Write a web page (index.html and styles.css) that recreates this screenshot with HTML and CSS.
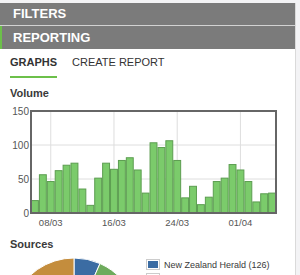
FILE: index.html
```html
<!DOCTYPE html>
<html lang="en">
<head>
  <meta charset="UTF-8" />
  <title>Reporting - Graphs</title>
  <link rel="stylesheet" href="styles.css">
</head>
<body>

  <div class="sidebar">
    <div class="panel-head">FILTERS</div>
    <div class="panel-head active">REPORTING</div>

    <div class="panel-body">
      <ul class="tabs">
        <li class="tab active">GRAPHS</li>
        <li class="tab">CREATE REPORT</li>
      </ul>

      <h3 class="graph-title">Volume</h3>
      <svg class="chart" id="volumeChart" width="275" height="128" viewBox="10 104 275 128"></svg>

      <h3 class="graph-title sources-title">Sources</h3>
      <div class="sources">
        <svg class="pie" width="128" height="128" viewBox="10 258 128 128">
          <path d="M74 322 L74 258 A64 64 0 0 1 100.03 263.54 Z" fill="#3b6ca3"/>
          <path d="M74 322 L100.03 263.54 A64 64 0 0 1 121.56 279.18 Z" fill="#6eab5c"/>
          <path d="M74 322 L121.56 279.18 A64 64 0 0 1 137.03 333.11 Z" fill="#c0504d"/>
          <path d="M74 322 L137.03 333.11 A64 64 0 0 1 74 386 Z" fill="#8fb5d8"/>
          <path d="M74 322 L74 386 A64 64 0 0 1 13.86 300.11 Z" fill="#8064a2"/>
          <path d="M74 322 L13.86 300.11 A64 64 0 0 1 74 258 Z" fill="#c48d3d"/>
        </svg>
        <ul class="legend">
          <li><span class="swatch"><span class="swatch-fill blue"></span></span>New Zealand Herald (126)</li>
          <li><span class="swatch"><span class="swatch-fill green"></span></span>Stuff.co.nz (95)</li>
        </ul>
      </div>
    </div>
  </div>

  <script>
    // daily volume, 06/03 - 05/04
    const volume = [19,57,47,63,71,74,36,12,52,74,65,78,82,64,30,104,97,107,78,23,40,13,24,47,52,72,64,47,17,29,30];

    function drawVolume(el, data) {
      const left = 31, top = 111, right = 276, bottom = 213;
      const slot = (right - left) / data.length;
      const scale = (bottom - top) / 150;
      let svg = '';

      // grid
      [50, 100].forEach(v => {
        const y = bottom - v * scale;
        svg += `<line x1="${left}" x2="${right}" y1="${y}" y2="${y}" class="grid"/>`;
      });
      const ticks = { 2: '08/03', 10: '16/03', 18: '24/03', 26: '01/04' };
      Object.keys(ticks).forEach(i => {
        const x = left + (+i + 0.5) * slot;
        svg += `<line x1="${x}" x2="${x}" y1="${top}" y2="${bottom}" class="grid"/>`;
        svg += `<text x="${x}" y="${bottom + 13}" class="x-label">${ticks[i]}</text>`;
      });

      // bars
      data.forEach((v, i) => {
        const h = v * scale;
        svg += `<rect x="${left + i * slot + 0.5}" y="${bottom - h + 0.5}" width="${slot - 1}" height="${h - 0.5}" class="bar"/>`;
      });

      // y axis labels
      [0, 50, 100, 150].forEach(v => {
        svg += `<text x="29" y="${bottom - v * scale + 3.5}" class="y-label">${v}</text>`;
      });

      svg += `<rect x="${left}" y="${top}" width="${right - left}" height="${bottom - top}" class="frame"/>`;
      el.innerHTML = svg;
    }

    drawVolume(document.getElementById("volumeChart"), volume);
  </script>
</body>
</html>
```

FILE: styles.css
```css
html, body {
  margin: 0;
  padding: 0;
  font-family: "Liberation Sans", Arial, sans-serif;
  background-color: #f3f3f5;
  color: #333;
}

.sidebar {
  width: 295px;
  margin-top: 3px;
  min-height: 272px;
  background-color: #fff;
  border-right: 1px solid #dadada;
}

.panel-head {
  height: 22px;
  line-height: 22px;
  padding-left: 13px;
  background-color: #7b7b7b;
  color: #fff;
  font-size: 13px;
  font-weight: bold;
  border-bottom: 1px solid #d2d2d2;
}

.panel-head.active {
  height: 23px;
  line-height: 23px;
  padding-left: 11px;
  border-left: 2px solid #6cc04a;
  border-bottom: none;
}

.panel-body {
  padding: 0 10px;
}

.tabs {
  list-style: none;
  display: flex;
  gap: 15px;
  margin: 0;
  padding: 6px 0 0 0;
}

.tab {
  font-size: 11px;
  line-height: 14px;
  padding-bottom: 7px;
  border-bottom: 2px solid transparent;
  color: #333;
}

.tab.active {
  font-weight: bold;
  border-bottom-color: #6cc04a;
}

.graph-title {
  margin: 8px 0 0 0;
  font-size: 11px;
  line-height: 14px;
  font-weight: bold;
  color: #3a3a3a;
}

.chart {
  display: block;
  margin-top: 4px;
}

.chart .grid {
  stroke: #dedede;
  stroke-width: 1;
}

.chart .bar {
  fill: #7bcb6b;
  stroke: #5c9d50;
  stroke-width: 1;
}

.chart .frame {
  fill: none;
  stroke: #666;
  stroke-width: 2;
}

.chart text {
  font-family: "Liberation Sans", Arial, sans-serif;
  fill: #555;
}

.chart .y-label {
  font-size: 10px;
  text-anchor: end;
}

.chart .x-label {
  font-size: 9.5px;
  text-anchor: middle;
}

.sources-title {
  margin-top: 5px;
}

.sources {
  display: flex;
  align-items: flex-start;
  margin-top: 7px;
}

.pie {
  display: block;
  flex-shrink: 0;
}

.pie path {
  stroke: #fff;
  stroke-width: 1;
}

.legend {
  list-style: none;
  margin: 0 0 0 8px;
  padding: 0;
  font-size: 9px;
  color: #3a3a3a;
}

.legend li {
  display: flex;
  align-items: center;
  height: 13px;
  margin-bottom: 1px;
}

.swatch {
  display: inline-block;
  border: 1px solid #ccc;
  padding: 1px;
  margin-right: 4px;
}

.swatch-fill {
  display: block;
  width: 10px;
  height: 7px;
}

.swatch-fill.blue {
  background-color: #3b6ca3;
}

.swatch-fill.green {
  background-color: #6eab5c;
}
```
